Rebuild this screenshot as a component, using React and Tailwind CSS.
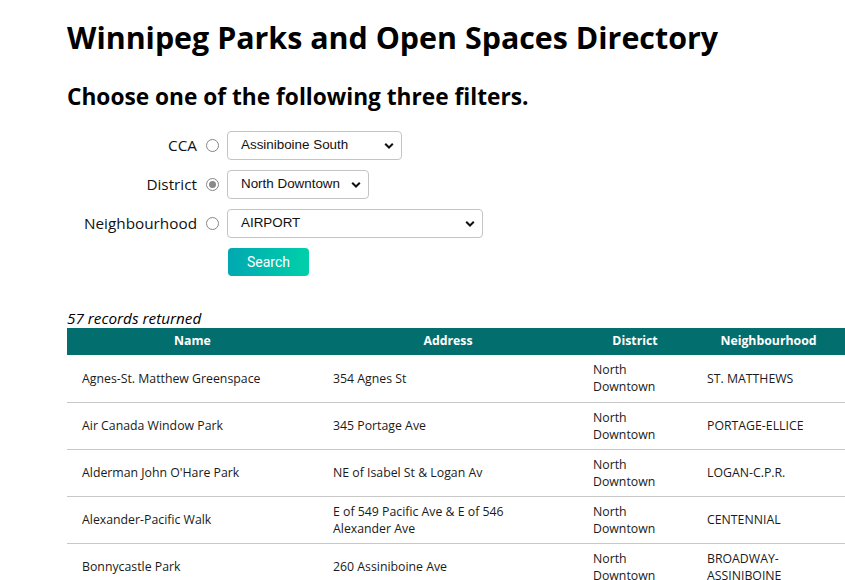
import React from 'react';

const rows = [
    { name: 'Agnes-St. Matthew Greenspace', address: '354 Agnes St', district: 'North Downtown', hood: 'ST. MATTHEWS' },
    { name: 'Air Canada Window Park', address: '345 Portage Ave', district: 'North Downtown', hood: 'PORTAGE-ELLICE' },
    { name: "Alderman John O'Hare Park", address: 'NE of Isabel St & Logan Av', district: 'North Downtown', hood: 'LOGAN-C.P.R.' },
    { name: 'Alexander-Pacific Walk', address: 'E of 549 Pacific Ave & E of 546 Alexander Ave', district: 'North Downtown', hood: 'CENTENNIAL' },
    { name: 'Bonnycastle Park', address: '260 Assiniboine Ave', district: 'North Downtown', hood: 'BROADWAY-ASSINIBOINE' },
];

const Chevron = () => (
    <svg className="absolute right-[8px] top-1/2 -translate-y-1/2 pointer-events-none" width="10" height="7" viewBox="0 0 10 7">
        <path d="M1.2 1.2 L5 5 L8.8 1.2" fill="none" stroke="#111" strokeWidth="2" />
    </svg>
);

const Select = ({ value, width }) => (
    <div className={`relative ${width}`}>
        <select
            defaultValue={value}
            className="appearance-none w-full h-[29px] pl-[13px] pr-[18px] border border-[#c4c4c4] rounded-[4px] bg-white text-[13.4px] text-[#111] font-['Liberation_Sans',Arial,sans-serif]"
        >
            <option>{value}</option>
        </select>
        <Chevron />
    </div>
);

const Radio = ({ checked }) => (
    <span className="w-[13px] h-[13px] rounded-full border border-[#858585] bg-white flex items-center justify-center">
        {checked && <span className="w-[7px] h-[7px] rounded-full bg-[#8a8a8a]" />}
    </span>
);

const FilterRow = ({ label, checked, value, width }) => (
    <div className="flex items-center">
        <label className="w-[130px] text-right text-[15.3px] text-[#111]">{label}</label>
        <div className="w-[30px] flex justify-center">
            <Radio checked={checked} />
        </div>
        <Select value={value} width={width} />
    </div>
);

const App = () => {
    return (
        <div className="w-full min-h-[580px] bg-white pl-[67px] text-black font-['Open_Sans','Noto_Sans',sans-serif]">
            <h1 className="pt-[18px] text-[30.4px] font-bold leading-[40px]">
                Winnipeg Parks and Open Spaces Directory
            </h1>
            <h2 className="mt-[24px] text-[22.7px] font-bold leading-[30px]">
                Choose one of the following three filters.
            </h2>
            <div className="mt-[19px] flex flex-col gap-[10px]">
                <FilterRow label="CCA" value="Assiniboine South" width="w-[175px]" />
                <FilterRow label="District" checked value="North Downtown" width="w-[142px]" />
                <FilterRow label="Neighbourhood" value="AIRPORT" width="w-[256px]" />
                <div className="flex">
                    <div className="w-[161px]" />
                    <button className="w-[81px] h-[28px] rounded-[4px] bg-gradient-to-r from-[#00a8b1] to-[#00d0a9] text-white text-[14px] font-['Roboto',sans-serif]">
                        Search
                    </button>
                </div>
            </div>
            <p className="mt-[32px] text-[15.3px] italic leading-[20px]">57 records returned</p>
            <table className="table-fixed w-[778px] border-collapse text-[12.3px] text-[#1a1a1a]">
                <colgroup>
                    <col className="w-[251px]" />
                    <col className="w-[260px]" />
                    <col className="w-[114px]" />
                    <col className="w-[153px]" />
                </colgroup>
                <thead>
                    <tr className="bg-[#036e6e] text-white h-[27px]">
                        <th className="font-bold">Name</th>
                        <th className="font-bold">Address</th>
                        <th className="font-bold">District</th>
                        <th className="font-bold">Neighbourhood</th>
                    </tr>
                </thead>
                <tbody>
                    {rows.map((r) => (
                        <tr key={r.name} className="h-[47px] border-b border-[#c8c8c8] leading-[17px]">
                            <td className="px-[15px] align-middle">{r.name}</td>
                            <td className="px-[15px] align-middle">{r.address}</td>
                            <td className="px-[15px] align-middle">{r.district}</td>
                            <td className="px-[15px] align-middle">{r.hood}</td>
                        </tr>
                    ))}
                </tbody>
            </table>
        </div>
    );
};

export default App;
